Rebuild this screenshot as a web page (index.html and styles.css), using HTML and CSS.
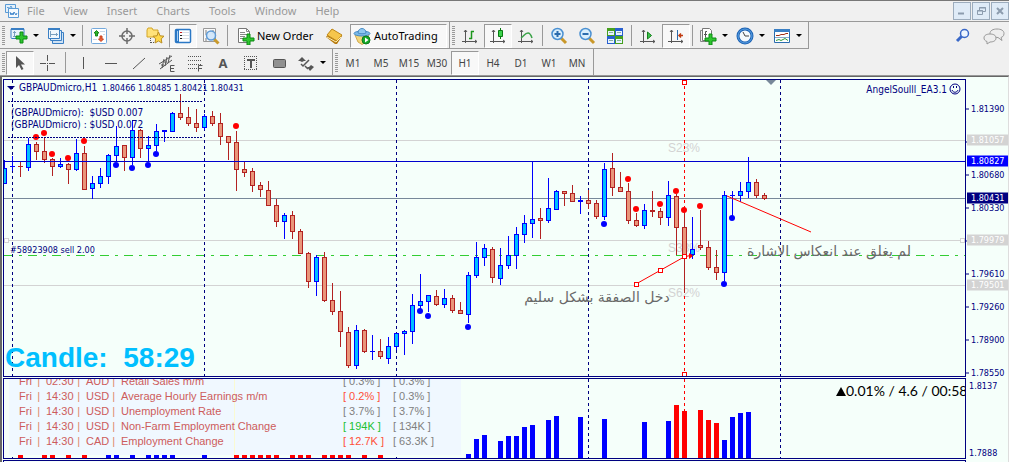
FILE: index.html
```html
<!DOCTYPE html>
<html lang="en">
<head>
    <meta charset="UTF-8">
    <meta name="viewport" content="width=device-width, initial-scale=1.0">
    <title>GBPAUDmicro,H1</title>
    <link rel="stylesheet" href="styles.css">
</head>
<body>
<div class="terminal">
    <header class="menu-bar">
        <svg class="app-icon" width="16" height="16" viewBox="0 0 16 16">
            <path d="M1.5 1.5h10v8h-10z" fill="#e4f0fa" stroke="#5b9bd5"/>
            <path d="M3 5l1-1 1 2 2-3 1 2" fill="none" stroke="#5b9bd5"/>
            <path d="M4.500 5.500h10v9h-10z" fill="#f4f9fd" stroke="#5b9bd5"/>
            <path d="M6 9l1 3 1-2 1 2 1-3 2 3 1-2" fill="none" stroke="#3f86cc"/>
        </svg>
        <nav class="menu">
            <a href="#">File</a>
            <a href="#">View</a>
            <a href="#">Insert</a>
            <a href="#">Charts</a>
            <a href="#">Tools</a>
            <a href="#">Window</a>
            <a href="#">Help</a>
        </nav>
        <div class="window-buttons">
            <button type="button" aria-label="Minimize"><svg width="10" height="10"><path d="M1 7.500h6" stroke="#8c9cae" stroke-width="2"/></svg></button>
            <button type="button" aria-label="Restore"><svg width="10" height="10" fill="none" stroke="#8c9cae"><path d="M3.500 4V1.500h6v4H7M3 2h7M1.500 4.500h5v4h-5zM1 5h6"/></svg></button>
            <button type="button" aria-label="Close"><svg width="10" height="10"><path d="M2 2l6 6M8 2L2 8" stroke="#8c9cae" stroke-width="2"/></svg></button>
        </div>
    </header>

    <div class="toolbar-row">
        <div class="toolbar">
            <span class="grip"></span>
            <button type="button" class="tool drop" aria-label="New chart">
                <svg width="18" height="18">
                    <rect x="1" y="1.500" width="13" height="10" rx="1" fill="#eaf4fc" stroke="#3a7fc4"/>
                    <path d="M1 2h13" stroke="#3a7fc4" stroke-width="2"/>
                    <path d="M4.500 4v6M3 5.500h3M3 9.500h6" stroke="#7aa0c0" fill="none"/>
                    <path d="M10 5h3v4h4v3h-4v4h-3v-4H6V9h4z" fill="#2fc52f" stroke="#0b8a12"/>
                </svg>
            </button>
            <button type="button" class="tool drop" aria-label="Profiles">
                <svg width="18" height="18">
                    <path d="M5.500 5.500h11v11h-11z" fill="#cfe2f4" stroke="#3a7fc4"/>
                    <path d="M3.500 3.500h11v10h-11z" fill="#dcebf8" stroke="#3a7fc4"/>
                    <path d="M1.500 1.500h11v10h-11z" fill="#f0f7fd" stroke="#3a7fc4"/>
                    <path d="M1 2h12" stroke="#3a7fc4" stroke-width="2"/>
                    <path d="M3.500 4v6M3 7.500h8M9.500 6v3" stroke="#7aa0c0"/>
                </svg>
            </button>
            <span class="separator"></span>
            <button type="button" class="tool" aria-label="Market Watch">
                <svg width="18" height="18">
                    <rect x="1.500" y="1.500" width="15" height="15" rx="1" fill="#fff" stroke="#74a9dc"/>
                    <path d="M10 4.500h5M3 12.500h4M13 7.500h2" stroke="#c8d8e8"/>
                    <path d="M6.500 3.500L9 6H7.500v3h-2V6H4z" fill="#2fb52f" stroke="#178a17"/>
                    <path d="M11 14.500L8.500 12H10V9h2v3h1.500z" fill="#f0643a" stroke="#c8401c"/>
                </svg>
            </button>
            <button type="button" class="tool" aria-label="Data Window">
                <svg width="18" height="18" fill="none" stroke="#6c6c6c">
                    <circle cx="9" cy="9" r="5" stroke-width="1.500"/>
                    <path d="M9 1v6M9 11v6M1 9h6M11 9h6" stroke-width="1.500"/>
                </svg>
            </button>
            <button type="button" class="tool" aria-label="Navigator">
                <svg width="18" height="18">
                    <path d="M1 3l1-2h4l1 2h5v7H1z" fill="#ffe27a" stroke="#d3a526"/>
                    <path d="M4.500 11v6M5 15.500h3" stroke="#555" stroke-dasharray="1 1"/>
                    <path d="M12.500 5l1.500 3.800 4 .4-2.800 2.700.7 4.100-3.400-2-3.500 2 .7-4.100L7 9.200l4-.4z" fill="#ffd84a" stroke="#b98d22"/>
                </svg>
            </button>
            <button type="button" class="tool pressed" aria-label="Terminal">
                <svg width="18" height="18">
                    <rect x="1.500" y="2.500" width="15" height="13" rx="1" fill="#fff" stroke="#2b78c5" stroke-width="1.500"/>
                    <path d="M2 3h3v12H2z" fill="#2b78c5"/>
                    <path d="M3.500 4v10" stroke="#a9d0f3"/>
                    <path d="M7 5.500h8M7 8.500h8M7 11.500h8" stroke="#d5dde6"/>
                    <path d="M6 5.500h2" stroke="#d02020"/><path d="M6 8.500h2M6 11.500h2" stroke="#222"/>
                </svg>
            </button>
            <button type="button" class="tool" aria-label="Strategy Tester">
                <svg width="18" height="18">
                    <path d="M1.500 1.500h12v13h-12z" fill="#fafafa" stroke="#999"/>
                    <path d="M3 11h2v3H3zM3 3h2v5H3zM10 3h2v4h-2z" fill="#bbb"/>
                    <path d="M12 12l4.500 4.500" stroke="#c99a2c" stroke-width="3"/>
                    <circle cx="9" cy="8.500" r="4.500" fill="#cfe6fa" fill-opacity=".9" stroke="#5f9bd6" stroke-width="1.500"/>
                </svg>
            </button>
            <span class="separator"></span>
            <button type="button" class="tool order">
                <svg width="18" height="18">
                    <path d="M1.500 1.500h8l3 3v11h-11z" fill="#fff" stroke="#777"/>
                    <path d="M9.500 1.500v3h3M3 5.500h5M3 7.500h7M3 9.500h5M3 11.500h3" stroke="#888" fill="none"/>
                    <path d="M10 7h3v4h4v3h-4v4h-3v-4H6v-3h4z" fill="#2fc52f" stroke="#0b8a12"/>
                </svg>
                New Order
            </button>
            <button type="button" class="tool" aria-label="MetaEditor">
                <svg width="18" height="18">
                    <path d="M1 10l6-8 10 7-5 8-2 0z" fill="#b77a10"/>
                    <path d="M7 2l10 6-5 6L2 8z" fill="#f6c64c" stroke="#c08a1c"/>
                    <path d="M2 10l9 5 5-5" fill="none" stroke="#fff0b0"/>
                </svg>
            </button>
            <button type="button" class="tool auto pressed">
                <svg width="18" height="18">
                    <path d="M2 8h14l-3 7-4 2.500-4-2.500z" fill="#f3d67a" stroke="#d0aa50"/>
                    <ellipse cx="9" cy="6.500" rx="8" ry="2.500" fill="#79b9e8" stroke="#4a8cc4"/>
                    <path d="M5 6c0-6 8-6 8 0-2 1-6 1-8 0z" fill="#8fc8f0" stroke="#4a8cc4"/>
                    <circle cx="13" cy="13" r="4" fill="#16a928" stroke="#0c7d1a"/>
                    <path d="M12 10.500l3.500 2.500-3.500 2.500z" fill="#fff"/>
                </svg>
                AutoTrading
            </button>
        </div>
        <div class="toolbar">
            <span class="grip"></span>
            <button type="button" class="tool" aria-label="Bar Chart">
                <svg width="18" height="18" fill="none" stroke="#555">
                    <path d="M4.500 3v13M1 14.500h15M3 5l1.500-2L6 5M14 13l2 1.500-2 1.500"/>
                    <path d="M10.500 4v8M10 4.500h3M8 11.500h3" stroke="#1c961c" stroke-width="1.500"/>
                </svg>
            </button>
            <button type="button" class="tool pressed" aria-label="Candlesticks">
                <svg width="18" height="18" fill="none" stroke="#555">
                    <path d="M4.500 3v13M1 14.500h15M3 5l1.500-2L6 5M14 13l2 1.500-2 1.500"/>
                    <path d="M11.500 1v11" stroke="#0a7a12"/><path d="M9.500 3.500h4v6h-4z" fill="#3bd34b" stroke="#0a7a12"/>
                </svg>
            </button>
            <button type="button" class="tool" aria-label="Line Chart">
                <svg width="18" height="18" fill="none" stroke="#555">
                    <path d="M4.500 3v13M1 14.500h15M3 5l1.500-2L6 5M14 13l2 1.500-2 1.500"/>
                    <path d="M4 11c3-2 4-5 7-5 1 0 3 2 4 5" stroke="#3aa347" stroke-width="1.500"/>
                </svg>
            </button>
            <span class="separator"></span>
            <button type="button" class="tool" aria-label="Zoom In">
                <svg width="18" height="18">
                    <path d="M11 11l5 5" stroke="#c9982a" stroke-width="3"/>
                    <circle cx="7.500" cy="7" r="5.500" fill="#d9eefc" stroke="#4a90d2" stroke-width="1.500"/>
                    <path d="M7.500 4v6M4.500 7h6" stroke="#2b6cae" stroke-width="2"/>
                </svg>
            </button>
            <button type="button" class="tool" aria-label="Zoom Out">
                <svg width="18" height="18">
                    <path d="M11 11l5 5" stroke="#c9982a" stroke-width="3"/>
                    <circle cx="7.500" cy="7" r="5.500" fill="#d9eefc" stroke="#4a90d2" stroke-width="1.500"/>
                    <path d="M4.500 7h6" stroke="#2b6cae" stroke-width="2"/>
                </svg>
            </button>
            <button type="button" class="tool" aria-label="Tile Windows">
                <svg width="18" height="18">
                    <path d="M1 1h8v8H1zM9 9h8v8H9z" fill="#46a01e"/>
                    <path d="M9 1h8v8H9zM1 9h8v8H1z" fill="#2860d0"/>
                    <path d="M2 4h6v4H2zM10 4h6v4h-6zM2 12h6v4H2zM10 12h6v4h-6z" fill="#e9f3ff"/>
                    <path d="M3 5.500h4M11 5.500h4M3 13.500h4M11 13.500h4" stroke="#8ab0a0"/>
                </svg>
            </button>
            <span class="separator"></span>
            <button type="button" class="tool" aria-label="Auto Scroll">
                <svg width="18" height="18" fill="none" stroke="#555">
                    <path d="M4.500 3v13M1 14.500h15M3 5l1.500-2L6 5M14 13l2 1.500-2 1.500"/>
                    <path d="M8.500 5l4 3.500-4 3.500z" fill="#3bc34b" stroke="#15801c"/>
                </svg>
            </button>
            <button type="button" class="tool pressed" aria-label="Chart Shift">
                <svg width="18" height="18" fill="none" stroke="#555">
                    <path d="M4.500 3v13M1 14.500h15M3 5l1.500-2L6 5M14 13l2 1.500-2 1.500"/>
                    <path d="M10.500 3v10" stroke="#2b6cae"/><path d="M12 8.500h4M14 6.500l-2 2 2 2" stroke="#c03a10" stroke-width="1.500"/>
                </svg>
            </button>
            <span class="separator"></span>
            <button type="button" class="tool drop" aria-label="Indicators">
                <svg width="18" height="18">
                    <path d="M1.500 3.500h8v11h-8z" fill="#eee" stroke="#888"/>
                    <path d="M3.500 1.500h7l2 2v10h-9z" fill="#fff" stroke="#777"/>
                    <path d="M8 4.500H6.500v6M5 7.500h3" stroke="#555" fill="none"/>
                    <path d="M10 7h3v4h4v3h-4v4h-3v-4H6v-3h4z" fill="#2fc52f" stroke="#0b8a12"/>
                </svg>
            </button>
            <button type="button" class="tool drop" aria-label="Periods">
                <svg width="18" height="18">
                    <circle cx="9" cy="9" r="7" fill="#f4f9fd" stroke="#1d62b4" stroke-width="3"/>
                    <circle cx="9" cy="9" r="7" fill="none" stroke="#5aa2e4"/>
                    <path d="M9 9L7 5M9 9h4" stroke="#444" fill="none"/>
                </svg>
            </button>
            <button type="button" class="tool drop" aria-label="Templates">
                <svg width="18" height="18">
                    <path d="M1.500 2.500h15v13h-15z" fill="#fff" stroke="#2b6cae"/>
                    <path d="M1 3.500h16" stroke="#3a7fc4" stroke-width="3"/>
                    <path d="M3 8.500h3l2-1h3l2-1h2" stroke="#a03018" fill="none"/>
                    <path d="M2 10.500h14" stroke="#88aaca"/>
                    <path d="M3 13.500l3-1 2 1 2-1 2-1 3 2" stroke="#2a9a3a" fill="none"/>
                </svg>
            </button>
        </div>
        <div class="corner-tools">
            <button type="button" aria-label="Search">
                <svg width="16" height="16"><path d="M7 8L2 13" stroke="#3a68c8" stroke-width="3"/><circle cx="9.500" cy="5.500" r="4" fill="#eef6ff" stroke="#3a68c8" stroke-width="1.500"/></svg>
            </button>
            <button type="button" aria-label="Chat">
                <svg width="22" height="18" fill="#eee" stroke="#999">
                    <path d="M14 2c4 0 7 1.500 7 4.500S19 10 18 10.500l1 3-4-3c-5 0-8-1-8-4S10 2 14 2z"/>
                    <path d="M7 7c3 0 6 1 6 4s-3 4-6 4l-3 2v-2.500C2 14 1 12.500 1 11c0-3 3-4 6-4z"/>
                </svg>
            </button>
        </div>
    </div>

    <div class="toolbar-row drawing-row">
        <div class="toolbar">
            <span class="grip"></span>
            <button type="button" class="tool pressed" aria-label="Cursor">
                <svg width="18" height="18"><path d="M5 2v12l3-3 2.500 5 2-1L10 10.500h4z" fill="#555"/></svg>
            </button>
            <button type="button" class="tool" aria-label="Crosshair">
                <svg width="18" height="18" stroke="#555"><path d="M8.500 1v6M8.500 11v6M1 9.500h6M10 9.500h6M8 9.500h1"/></svg>
            </button>
            <span class="separator"></span>
            <button type="button" class="tool" aria-label="Vertical Line">
                <svg width="18" height="18" stroke="#555"><path d="M9.500 3v12"/></svg>
            </button>
            <button type="button" class="tool" aria-label="Horizontal Line">
                <svg width="18" height="18" stroke="#555"><path d="M3 9.500h12"/></svg>
            </button>
            <button type="button" class="tool" aria-label="Trendline">
                <svg width="18" height="18" stroke="#555"><path d="M3 15L15 4"/></svg>
            </button>
            <button type="button" class="tool" aria-label="Equidistant Channel">
                <svg width="18" height="18" stroke="#555" fill="none">
                    <path d="M1 10l13-8M2 15l12-9M4 14l2-9M7 12l2-9M10 9l2-8M3 11h3M6 8h3"/>
                    <path d="M16.500 11.500h-4v6h4M12 14.500h4"/>
                </svg>
            </button>
            <button type="button" class="tool" aria-label="Fibonacci">
                <svg width="18" height="18" stroke="#555" fill="none">
                    <path d="M2 2.500h14M2 6.500h14M2 10.500h14M2 14.500h9" stroke-dasharray="1 1"/>
                    <path d="M16.500 11.500h-4v6M12 14.500h4"/>
                </svg>
            </button>
            <button type="button" class="tool letter" aria-label="Text">A</button>
            <button type="button" class="tool" aria-label="Text Label">
                <svg width="18" height="18" stroke="#555" fill="none">
                    <path d="M2.500 2v14M2 15.500h13M14.500 2v14M2 2.500h13" stroke-dasharray="1 1"/>
                    <path d="M5 6h8M9 5v9" stroke-width="2"/>
                </svg>
            </button>
            <button type="button" class="tool" aria-label="Rectangle">
                <svg width="18" height="18"><rect x="3.500" y="5.500" width="12" height="8" rx="1" fill="#909090" stroke="#555"/></svg>
            </button>
            <button type="button" class="tool drop" aria-label="Arrows">
                <svg width="18" height="18" fill="#555">
                    <path d="M5 3l4 4H7L5 8 3 7H1zM14 11l3 2-4 4-3-4h2z"/>
                    <path d="M4 10l2 2 6-6M8 12l3 3" stroke="#555" stroke-width="1.500" fill="none"/>
                </svg>
            </button>
        </div>
        <div class="toolbar periods">
            <span class="grip"></span>
            <button type="button" class="tool">M1</button>
            <button type="button" class="tool">M5</button>
            <button type="button" class="tool">M15</button>
            <button type="button" class="tool">M30</button>
            <button type="button" class="tool pressed">H1</button>
            <button type="button" class="tool">H4</button>
            <button type="button" class="tool">D1</button>
            <button type="button" class="tool">W1</button>
            <button type="button" class="tool">MN</button>
        </div>
    </div>

    <main class="chart-window">
        <section class="pane price-pane">
            <div class="plot">
                <svg class="plot-drawing" id="price-plot"></svg>
                <div class="expert">AngelSoulll_EA3.1
                    <svg width="12" height="12" fill="none" stroke="#000080"><circle cx="6" cy="6" r="5"/><path d="M4.500 3v2M7.500 3v2M3 7c1 3 5 3 6 0"/></svg>
                </div>
                <div class="candle-timer">Candle:&nbsp; 58:29</div>
            </div>
            <div class="axis" id="price-axis"></div>
        </section>

        <section class="pane volume-pane">
            <div class="plot">
                <svg class="plot-drawing" id="volume-plot"></svg>
                <table class="news">
                    <tbody>
                    <tr><td>Fri</td><td>02:30</td><td>AUD</td><td>Retail Sales m/m</td><td>[ 0.3% ]</td><td>[ 0.3% ]</td></tr>
                    <tr><td>Fri</td><td>14:30</td><td>USD</td><td>Average Hourly Earnings m/m</td><td class="worse">[ 0.2% ]</td><td>[ 0.3% ]</td></tr>
                    <tr><td>Fri</td><td>14:30</td><td>USD</td><td>Unemployment Rate</td><td>[ 3.7% ]</td><td>[ 3.7% ]</td></tr>
                    <tr><td>Fri</td><td>14:30</td><td>USD</td><td>Non-Farm Employment Change</td><td class="better">[ 194K ]</td><td>[ 134K ]</td></tr>
                    <tr><td>Fri</td><td>14:30</td><td>CAD</td><td>Employment Change</td><td class="worse">[ 12.7K ]</td><td>[ 63.3K ]</td></tr>
                    </tbody>
                </table>
                <div class="spread"><span class="up"></span>0.01% / 4.6 / 00:58</div>
            </div>
            <div class="axis range">
                <span>1.8137</span>
                <span>1.7888</span>
            </div>
        </section>

        <section class="pane next-pane">
            <div class="plot"></div>
            <div class="axis"></div>
        </section>
    </main>
</div>
<script src="chart.js"></script>
</body>
</html>
```

FILE: styles.css
```css
* {
    box-sizing: border-box;
}

body {
    margin: 0;
    font-family: "Noto Sans", "Open Sans", sans-serif;
    font-size: 11px;
    background-color: #f0f0f0;
    color: #000;
}

svg {
    display: block;
    flex: none;
}

button {
    font: inherit;
    color: inherit;
    background: none;
    border: none;
    padding: 0;
    white-space: nowrap;
}

.terminal {
    display: flex;
    flex-direction: column;
    height: 100vh;
    overflow: hidden;
}

/* menu */
.menu-bar {
    display: flex;
    align-items: center;
    flex: none;
    height: 22px;
    border-top: 1px solid #777;
    border-bottom: 1px solid #999;
    padding-left: 4px;
}

.menu {
    display: flex;
    gap: 19px;
    margin-left: 7px;
}

.menu a {
    color: #999;
    text-decoration: none;
    line-height: 20px;
}

.window-buttons {
    display: flex;
    gap: 1px;
    margin-left: auto;
}

.window-buttons button {
    display: flex;
    align-items: center;
    justify-content: center;
    width: 18px;
    height: 18px;
    border: 1px solid #9cacbd;
    background-color: #dfebf7;
}

/* toolbars */
.toolbar-row {
    display: flex;
    flex: none;
    height: 27px;
}

.toolbar {
    display: flex;
    align-items: center;
    padding: 1px 2px 0;
    border-right: 1px solid #999;
    border-bottom: 1px solid #999;
}

.drawing-row {
    border-bottom: 1px solid #999;
}

.drawing-row .toolbar {
    border-bottom: none;
}

.grip {
    width: 3px;
    height: 20px;
    margin-right: 1px;
    background: repeating-linear-gradient(#999 0 1px, #f0f0f0 1px 2px);
}

.separator {
    width: 1px;
    height: 21px;
    margin: 0 2px;
    background-color: #999;
}

.drawing-row .separator {
    margin: 0 3px;
}

.tool {
    display: flex;
    align-items: center;
    justify-content: center;
    width: 28px;
    height: 24px;
    border: 1px solid transparent;
}

.drop {
    width: 37px;
    gap: 5px;
}

.drop::after {
    content: "";
    border: 3px solid transparent;
    border-top-color: #000;
    border-bottom: none;
}

.order {
    justify-content: flex-start;
    width: 90px;
    padding-left: 6px;
    gap: 2px;
}

.auto {
    justify-content: flex-start;
    width: 97px;
    margin-left: 2px;
    padding-left: 2px;
    gap: 3px;
}

.pressed {
    background-color: #f8f8f8;
    background-clip: padding-box;
    border-color: #999 #fff #fff #999;
}

.letter {
    font-weight: bold;
    font-size: 13px;
    color: #555;
}

.periods .tool {
    font-size: 10px;
    color: #444;
}

.corner-tools {
    display: flex;
    align-items: center;
    gap: 12px;
    margin-left: auto;
    padding-right: 4px;
}

/* charts */
.chart-window {
    display: flex;
    flex-direction: column;
    gap: 1px;
    flex: 1;
    border-top: 1px solid #666;
    border-left: 2px solid #666;
    border-right: 1px solid #ddd;
    padding: 2px 0 0 1px;
    background-color: #f5fffa;
    color: #000080;
    font-family: "DejaVu Sans Condensed", "DejaVu Sans", sans-serif;
    font-size: 10px;
    overflow: hidden;
}

.pane {
    display: flex;
    flex: none;
}

.price-pane {
    height: 298px;
}

.volume-pane {
    height: 81px;
}

.next-pane {
    flex: 1;
}

.plot {
    position: relative;
    flex: 1;
    border: 1px solid #000080;
    overflow: hidden;
}

.next-pane .plot {
    border-bottom: none;
}

.plot-drawing {
    width: 100%;
    height: 100%;
}

.plot-drawing text {
    white-space: pre;
}

.plot-drawing .small {
    font-size: 9px;
}

.plot-drawing .level-name {
    font-family: "Liberation Sans", sans-serif;
    font-size: 12px;
    fill: #d3d3d3;
}

.plot-drawing .note {
    font-family: "DejaVu Sans", sans-serif;
    font-size: 14px;
    fill: #696969;
    direction: rtl;
    text-anchor: middle;
}

.expert {
    position: absolute;
    top: 3px;
    right: 4px;
    display: flex;
    align-items: center;
    gap: 2px;
}

.candle-timer {
    position: absolute;
    left: 1px;
    bottom: 0;
    font: bold 28px/36px "Liberation Sans", sans-serif;
    color: #00bfff;
}

.axis {
    position: relative;
    flex: none;
    width: 42px;
    font-size: 9px;
}

.axis-label {
    position: absolute;
    left: 1px;
    right: 0;
    height: 11px;
    padding-left: 4px;
    line-height: 11px;
    transform: translateY(-50%);
}

.axis-label.tick::before {
    content: "";
    position: absolute;
    left: -1px;
    top: 5px;
    width: 3px;
    height: 1px;
    background-color: #000080;
}

.axis-label.level {
    background-color: #d3d3d3;
    color: #fff;
}

.axis-label.line {
    background-color: #0000ff;
    color: #fff;
}

.axis-label.bid {
    background-color: #000080;
    color: #fff;
}

.range {
    display: flex;
    flex-direction: column;
    justify-content: space-between;
    padding: 2px 0 0 3px;
    line-height: 12px;
}

/* economic calendar */
.news {
    position: absolute;
    left: 5px;
    bottom: 3px;
    width: 452px;
    padding: 0 0 6px 8px;
    border-spacing: 0;
    table-layout: fixed;
    background: linear-gradient(#fafad2, #fafad2) 225px 5px / 1px 100% no-repeat #f0f8ff;
    font: 11px/15px "Liberation Sans", sans-serif;
    color: #cd5c5c;
}

.news td {
    padding: 0 0 0 2px;
    white-space: nowrap;
}

.news td:nth-child(1) {
    width: 27px;
}

.news td:nth-child(2) {
    width: 40px;
}

.news td:nth-child(3) {
    width: 35px;
}

.news td:nth-child(4) {
    width: 222px;
}

.news td:nth-child(5) {
    width: 50px;
}

.news td:nth-child(-n+3)::after {
    content: "|";
    float: right;
    margin-right: 4px;
    color: #e08868;
}

.news td:nth-child(n+5) {
    color: #808080;
}

.news td.worse {
    color: #ff4f38;
}

.news td.better {
    color: #22c032;
}

.spread {
    position: absolute;
    left: 832px;
    top: 2px;
    display: flex;
    align-items: center;
    font: 14px/20px Lato, sans-serif;
    color: #000;
    white-space: nowrap;
}

.up {
    border: 5px solid transparent;
    border-top: none;
    border-bottom: 9px solid #000;
}
```

FILE: chart.js
```javascript
const BAR_STEP = 8;
const FIRST_BAR = 4;

// one bar per row: high, body top, body bottom, low, u(p) / d(own)
const bars = `160 168 184 184 u|156 166 167 171 u|162 166 167 177 d|138 144 168 171 u|142 144 152 160 d
138 151 160 163 d|158 159 167 176 d|158 164 167 168 u|163 164 170 184 d|139 153 170 171 u
146 153 190 190 d|176 183 189 199 u|168 176 184 188 u|154 155 177 184 u|126 146 156 162 u
146 145 158 171 d|120 130 158 165 u|129 130 149 158 d|136 145 149 162 u|124 131 146 151 u
130 130 132 142 u|112 113 132 132 u|94 113 118 120 d|107 117 124 126 d|109 123 128 132 d
114 116 128 130 u|111 116 124 126 d|113 123 137 145 d|136 136 143 160 d|131 142 170 191 d
161 169 173 177 d|168 171 186 192 d|182 185 190 197 d|181 190 206 206 d|199 205 222 227 d
213 215 222 239 u|211 215 232 239 d|229 231 254 254 d|252 253 282 288 d|255 257 282 296 u
252 257 301 302 d|283 300 312 315 d|291 311 332 347 d|327 332 366 368 d|325 330 366 369 u
329 330 352 353 d|335 351 352 360 u|339 351 357 359 d|337 346 359 364 u|333 333 347 350 u
330 331 334 355 u|294 305 332 344 u|274 301 306 309 u|295 295 302 312 u|290 296 305 306 d
289 298 305 308 u|295 298 311 313 d|302 310 314 314 d|272 275 315 323 u|242 257 276 278 u
244 248 258 266 u|247 249 278 283 d|248 265 279 285 u|236 255 266 269 u|227 234 256 269 u
215 223 235 243 u|162 219 224 238 u|208 218 221 239 d|178 208 221 223 u|190 191 210 210 u
191 191 194 206 d|185 193 202 202 d|196 200 202 214 u|190 200 204 209 d|200 203 217 219 d
163 169 217 220 u|153 168 188 196 d|172 187 192 192 d|183 191 221 224 d|213 220 226 227 d
204 210 226 229 u|191 210 212 217 d|208 211 218 225 d|181 195 218 226 u|194 196 228 255 d
210 227 257 293 d|217 249 255 259 u|210 245 248 250 d|241 247 268 270 d|250 267 273 280 d
191 195 273 281 u|191 195 196 216 u|182 191 196 202 u|157 182 192 198 u|179 182 196 198 d
193 195 199 200 d`.split(/[|\n]/).map(row => row.split(" "));

const sellDots = [[36, 137], [44, 133], [52, 154], [68, 158], [84, 141], [236, 126], [628, 179],
    [636, 209], [660, 204], [676, 191], [684, 210], [700, 206]];
const buyDots = [[116, 165], [132, 168], [148, 165], [156, 154], [420, 311], [428, 316],
    [468, 327], [604, 224], [732, 218], [724, 284]];

// x and top of every histogram bar
const blueVolume = [[108, 455], [116, 455], [132, 455], [148, 455], [156, 455], [164, 455], [172, 455],
    [204, 455], [468, 454], [476, 439], [484, 435], [500, 441], [508, 436], [516, 436], [524, 427],
    [532, 425], [548, 420], [556, 416], [580, 417], [604, 419], [644, 422], [668, 421], [724, 440],
    [732, 417], [740, 413], [748, 412]];
const redVolume = [[20, 455], [44, 455], [52, 455], [68, 455], [84, 455], [236, 455], [244, 455],
    [252, 455], [260, 455], [268, 455], [276, 455], [292, 455], [300, 455], [308, 455], [324, 455],
    [332, 455], [340, 455], [348, 455], [364, 455], [380, 455], [676, 405], [684, 411], [700, 410],
    [708, 420], [716, 423]];

const days = [12, 204, 396, 588, 780];

function rect(x, y, w, h, fill) {
    return `<rect x="${x}" y="${y}" width="${w}" height="${h}" fill="${fill}"/>`;
}

function hline(y, color, extra = "") {
    return `<path d="M4 ${y + 0.5}H3000" stroke="${color}" ${extra}/>`;
}

function vline(x, top, color) {
    return `<path d="M${x + 0.5} ${top}V470" stroke="${color}" stroke-dasharray="3 3"/>`;
}

function text(x, y, value, cls = "") {
    return `<text x="${x}" y="${y}" fill="#000080" class="${cls}">${value}</text>`;
}

function dot(x, y, color) {
    return `<circle cx="${x}" cy="${y}" r="3" fill="${color}"/>`;
}

function handle(x, y, color = "#ff0000") {
    return `<rect x="${x - 1.5}" y="${y - 1.5}" width="4" height="4" fill="#fff" stroke="${color}"/>`;
}

function candle(bar, i) {
    const [high, top, bottom, low] = bar.map(Number);
    const x = FIRST_BAR + i * BAR_STEP;
    const up = bar[4] === "u";
    const line = up ? "#0000ff" : "#b22222";
    let out = rect(x, high, 1, low - high, line);
    out += rect(x - 2, top, 5, bottom - top, line);
    if (bottom - top > 2) {
        out += rect(x - 1, top + 1, 3, bottom - top - 2, up ? "#00bfff" : "#e9967a");
    }
    return out;
}

function drawPrices() {
    let out = "";
    out += [140, 240, 285].map(y => hline(y, "#d3d3d3")).join("");
    out += hline(255, "#32cd32", 'stroke-dasharray="9 6 3 6"');
    out += text(668, 152, "S23%", "level-name");
    out += text(668, 252, "S38%", "level-name");
    out += text(668, 297, "S62%", "level-name");
    out += days.map(x => vline(x, 80, "#000080")).join("");
    out += vline(684, 80, "#ff0000");
    out += hline(198, "#778899");
    out += bars.map(candle).join("");
    out += hline(161, "#0000cd");
    out += sellDots.map(([x, y]) => dot(x, y, "#ff0000")).join("");
    out += buyDots.map(([x, y]) => dot(x, y, "#0000ff")).join("");

    // header and money info
    out += '<path d="M7 86h8l-4 4z" fill="#000080"/>';
    out += text(19, 91, "GBPAUDmicro,H1");
    out += text(102, 91, "1.80466 1.80485 1.80421 1.80431", "small");
    out += '<path d="M8 101.5H203M8 137.5H203" stroke="#000080" stroke-dasharray="2 1"/>';
    out += text(11, 116, "(GBPAUDmicro):  $USD 0.007");
    out += text(11, 128, "(GBPAUDmicro) : $USD 0.072");
    out += text(10, 253, "#58923908 sell 2.00", "small");

    // annotations
    out += '<path d="M636 284L684 257L692 255M727 196L811 232" stroke="#ff0000" fill="none"/>';
    out += '<path d="M689 253l4 3-4 3z" fill="#ff0000"/>';
    out += handle(636, 284) + handle(660, 270) + handle(684, 256) + handle(684, 82) + handle(684, 374);
    out += handle(6, 240, "#d3d3d3") + handle(962, 240, "#d3d3d3");
    out += '<path d="M766 80h10l-5 5z" fill="#778899"/>';
    out += text(829, 256, "لم يغلق عند انعكاس الاشارة", "note");
    out += text(597, 302, "دخل الصفقة بشكل سليم", "note");
    document.getElementById("price-plot").innerHTML = `<g transform="translate(-4 -80)">${out}</g>`;
}

function drawVolume() {
    let out = days.map(x => vline(x, 379, "#000080")).join("");
    out += vline(684, 379, "#ff0000");
    out += blueVolume.map(([x, y]) => rect(x - 2, y, 5, 458 - y, "#0000ff")).join("");
    out += redVolume.map(([x, y]) => rect(x - 2, y, 5, 458 - y, "#ff0000")).join("");
    document.getElementById("volume-plot").innerHTML = `<g transform="translate(-4 -379)">${out}</g>`;
}

function drawAxis() {
    const labels = [
        [1.8139, "tick"], [1.8104, "tick"], [1.8068, "tick"], [1.8033, "tick"], [1.7997, "tick"],
        [1.7961, "tick"], [1.7926, "tick"], [1.7890, "tick"], [1.7855, "tick"],
        [1.81057, "level"], [1.79979, "level"], [1.79501, "level"], [1.80827, "line"], [1.80431, "bid"]
    ];
    document.getElementById("price-axis").innerHTML = labels.map(([price, cls]) => {
        const top = Math.round(30 + (1.8139 - price) * 9296);
        return `<span class="axis-label ${cls}" style="top: ${top}px">${price.toFixed(5)}</span>`;
    }).join("");
}

drawPrices();
drawVolume();
drawAxis();
```
